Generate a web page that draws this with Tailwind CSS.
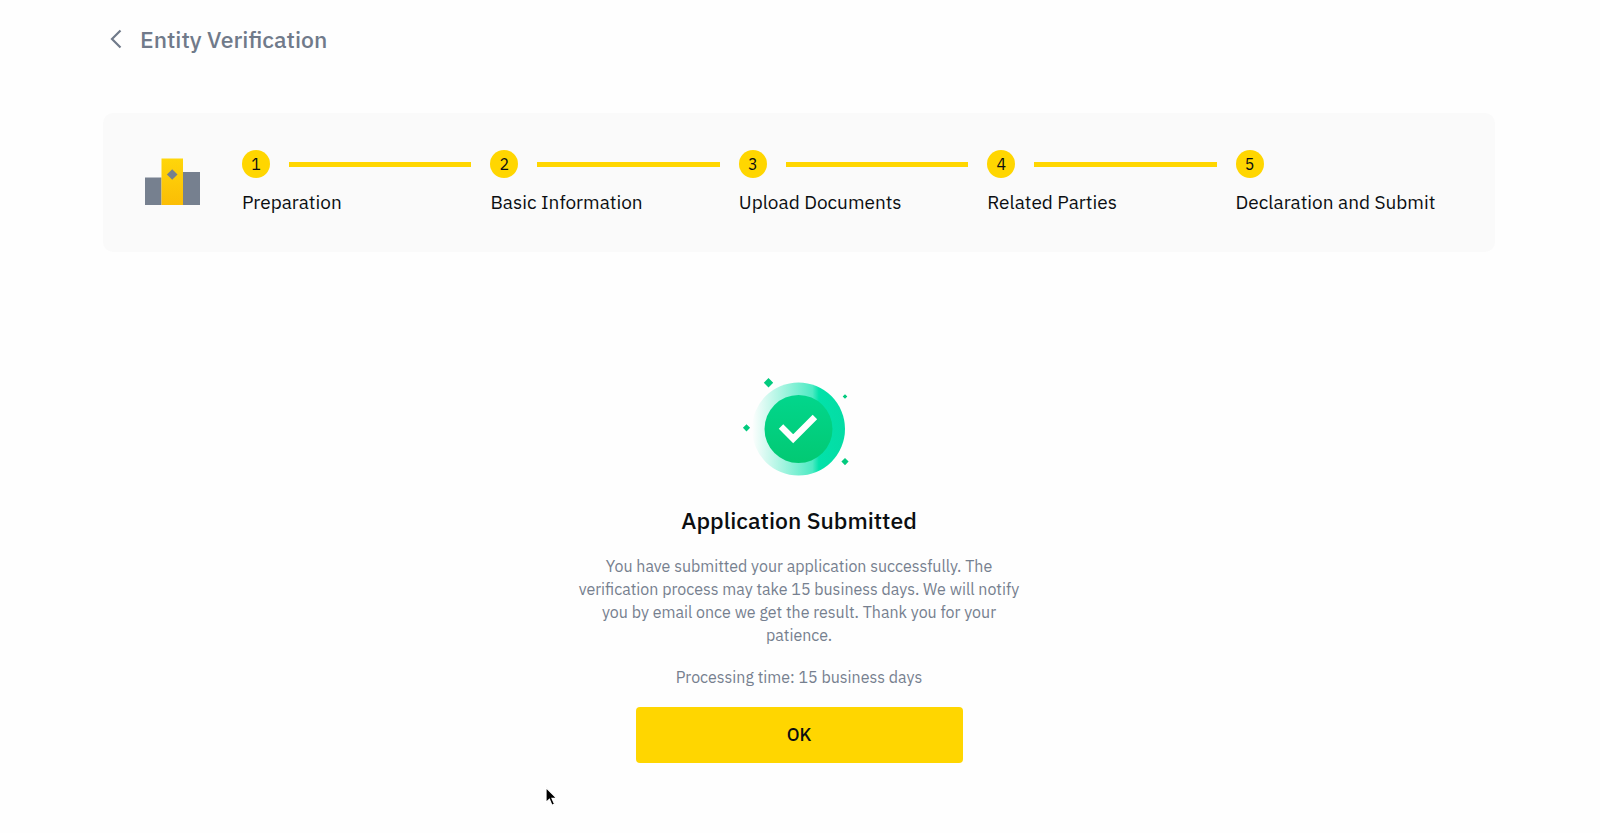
<!DOCTYPE html>
<html lang="en">
<head>
  <meta charset="UTF-8">
  <meta name="viewport" content="width=device-width, initial-scale=1.0">
  <title>Entity Verification</title>
  <script src="https://cdn.jsdelivr.net/npm/@tailwindcss/browser@4"></script>
</head>
<body class="bg-[#fefefe] text-[#0b0e11] font-['IBM_Plex_Sans',Roboto,sans-serif]">
  <div class="min-h-screen pr-[105px] pl-[103px]">
    <header class="flex items-center pt-6 pl-[7px]">
      <a href="#" aria-label="Back" class="text-[#707a8a]">
        <svg width="12" height="20" viewBox="0 0 12 20" fill="none" stroke="currentColor" stroke-width="2.200">
          <path d="M10.500 1.500 L2 10 L10.500 18.500" />
        </svg>
      </a>
      <h1 class="ml-[18px] text-[23px] leading-[30px] font-medium text-[#707a8a]">Entity Verification</h1>
    </header>

    <!-- Progress steps -->
    <section class="mt-[59px] flex items-start rounded-[10px] bg-[#fafafa] pt-[37px] pr-[11px] pb-9 pl-[42px]">
      <svg class="mt-2 shrink-0" width="55" height="47" viewBox="0 0 55 47">
        <defs>
          <linearGradient id="tower" x1="0" y1="0" x2="0" y2="1">
            <stop offset="0" stop-color="#ffd60a" />
            <stop offset="1" stop-color="#fbbd05" />
          </linearGradient>
        </defs>
        <path fill="#76808f" d="M0 19.500h16.500V47H0zM38 14h17v33H38z" />
        <path fill="url(#tower)" d="M16.500 0.500H38v46.500H16.500z" />
        <path fill="#76808f" d="M27.200 11.200 32.500 16.500 27.200 21.800 21.900 16.500z" />
      </svg>
      <ol class="ml-[42px] grid grow grid-cols-5 text-[19px]">
        <li>
          <div class="flex items-center gap-[19px] pr-[19px]">
            <span class="flex size-7 shrink-0 items-center justify-center rounded-full bg-[#ffd600] text-base">1</span>
            <span class="h-[5px] grow bg-[#ffd600]"></span>
          </div>
          <p class="mt-[10px] leading-7">Preparation</p>
        </li>
        <li>
          <div class="flex items-center gap-[19px] pr-[19px]">
            <span class="flex size-7 shrink-0 items-center justify-center rounded-full bg-[#ffd600] text-base">2</span>
            <span class="h-[5px] grow bg-[#ffd600]"></span>
          </div>
          <p class="mt-[10px] leading-7">Basic Information</p>
        </li>
        <li>
          <div class="flex items-center gap-[19px] pr-[19px]">
            <span class="flex size-7 shrink-0 items-center justify-center rounded-full bg-[#ffd600] text-base">3</span>
            <span class="h-[5px] grow bg-[#ffd600]"></span>
          </div>
          <p class="mt-[10px] leading-7">Upload Documents</p>
        </li>
        <li>
          <div class="flex items-center gap-[19px] pr-[19px]">
            <span class="flex size-7 shrink-0 items-center justify-center rounded-full bg-[#ffd600] text-base">4</span>
            <span class="h-[5px] grow bg-[#ffd600]"></span>
          </div>
          <p class="mt-[10px] leading-7">Related Parties</p>
        </li>
        <li>
          <div class="flex items-center">
            <span class="flex size-7 shrink-0 items-center justify-center rounded-full bg-[#ffd600] text-base">5</span>
          </div>
          <p class="mt-[10px] leading-7">Declaration and Submit</p>
        </li>
      </ol>
    </section>

    <!-- Result -->
    <main class="mx-auto mt-[125px] flex max-w-[460px] flex-col items-center text-center">
      <svg width="116" height="100" viewBox="0 0 116 100">
        <defs>
          <linearGradient id="ring" x1="0" y1="0" x2="1" y2="0">
            <stop offset="0" stop-color="#02e2aa" stop-opacity="0" />
            <stop offset="0.650" stop-color="#02e2aa" stop-opacity="0.700" />
            <stop offset="0.720" stop-color="#02e2aa" />
            <stop offset="1" stop-color="#04dca4" />
          </linearGradient>
          <linearGradient id="disc" x1="0" y1="0" x2="0" y2="1">
            <stop offset="0" stop-color="#02d68c" />
            <stop offset="1" stop-color="#02c973" />
          </linearGradient>
        </defs>
        <circle cx="57.500" cy="52" r="46.500" fill="url(#ring)" />
        <circle cx="57.500" cy="52" r="34" fill="url(#disc)" />
        <path fill="none" stroke="#fff" stroke-width="6.300" d="M40 49.500 52.200 61.700 73.900 40" />
        <path fill="#02ca7e" d="M27.500 1l4.700 4.700-4.700 4.700-4.700-4.700zM104 17.200l2.300 2.300-2.300 2.300-2.300-2.300zM5.500 47.200l3.600 3.600-3.600 3.600-3.600-3.600zM104 81l3.600 3.600-3.600 3.600-3.600-3.600z" />
      </svg>
      <h2 class="mt-[27px] text-[23px] leading-8 font-medium">Application Submitted</h2>
      <p class="mt-[19px] text-base leading-[23px] text-[#76808f]">You have submitted your application successfully. The verification process may take 15 business days. We will notify you by email once we get the result. Thank you for your patience.</p>
      <p class="mt-[19px] text-base leading-[23px] text-[#76808f]">Processing time: 15 business days</p>
      <button type="button" class="mt-[18px] h-14 w-[327px] rounded-[4px] bg-[#ffd600] text-lg font-medium">OK</button>
    </main>
  </div>

  <!-- Mouse pointer -->
  <svg class="absolute top-[786px] left-[545px]" width="14" height="21" viewBox="0 0 14 21">
    <path fill="#000" stroke="#fff" stroke-width="1.200" d="M1 1.500V16.500L4.400 13.300 6.900 19.200 9.500 18.100 7 12.400H11.800z" />
  </svg>
</body>
</html>
